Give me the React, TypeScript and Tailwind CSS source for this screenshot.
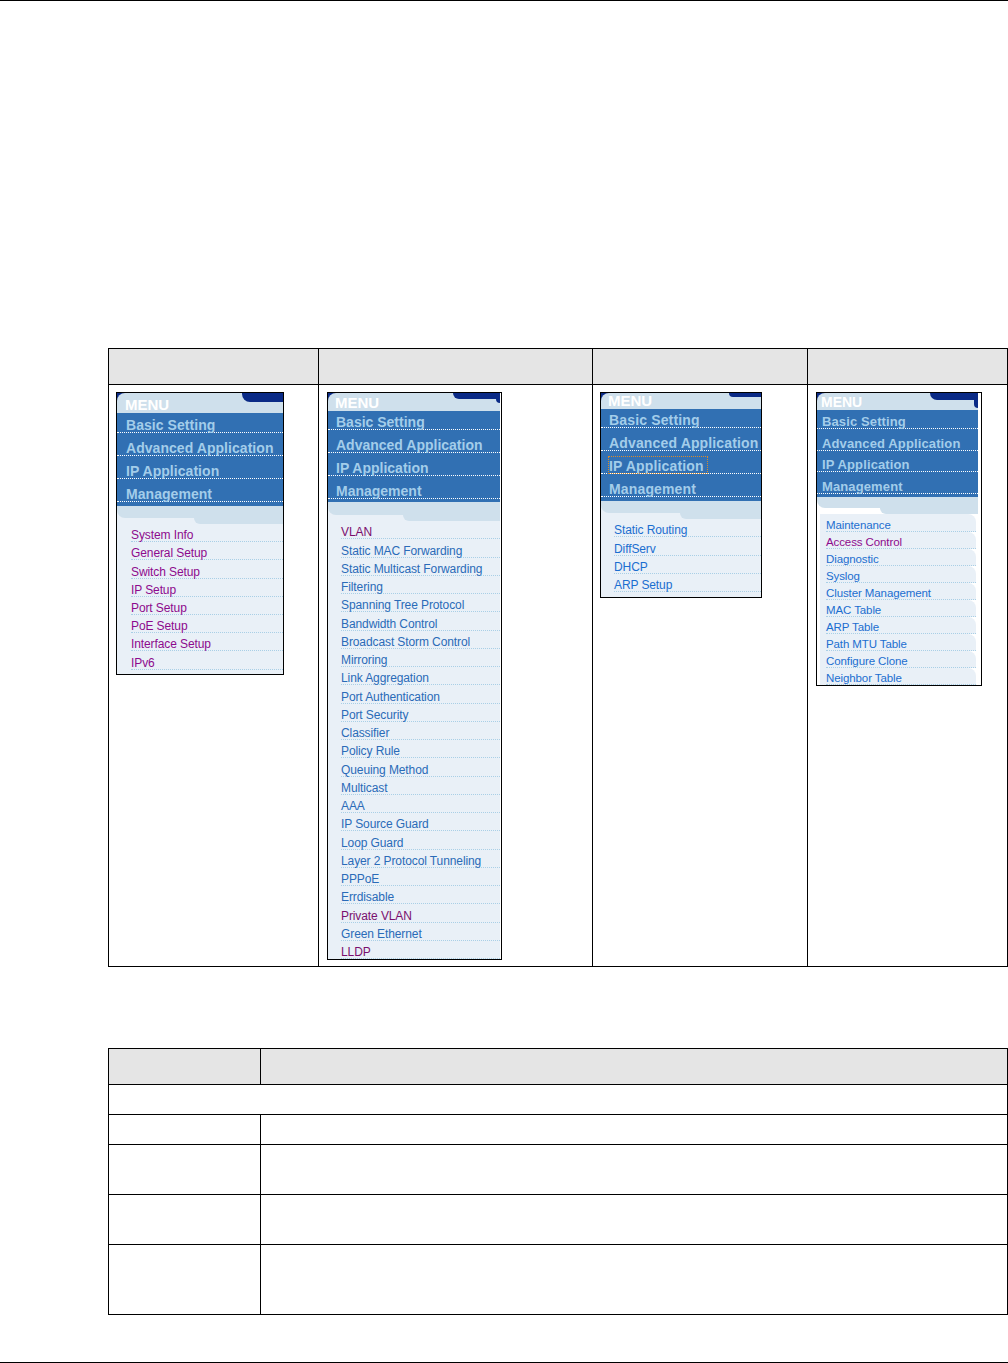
import React from 'react';

type MenuItem = { label: string; visited?: boolean };

type MenuProps = {
  width: number;
  height: number;
  padRight: number;
  headerH: number;
  textLeft: number;
  menuSize: number;
  menuTop: number;
  notchW: number;
  notchH: number;
  notchSide?: number;
  firstRow: number;
  rowH: number;
  tailH: number;
  bandH: number;
  stepLeft: number;
  itemH: number;
  itemLeft: number;
  itemSize: number;
  itemColor: string;
  visitedColor: string;
  titleSize: number;
  titleTracking: number;
  focusIp?: boolean;
  tabbed?: boolean;
  items: MenuItem[];
};

const sections = ['Basic Setting', 'Advanced Application', 'IP Application', 'Management'];

const Menu: React.FC<MenuProps> = (p) => (
  <div className="border border-black bg-white overflow-hidden font-['Liberation_Sans',Arial,sans-serif]" style={{ width: p.width, height: p.height, paddingRight: p.padRight }}>
    <div className={`h-full ${p.tabbed ? 'bg-white' : 'bg-[#e9f0f7]'}`}>
      <div className="bg-[#0a2a86]">
        <div className="relative bg-[#cfe0ec] rounded-tl-[8px] overflow-hidden" style={{ height: p.headerH, paddingLeft: p.textLeft - 1 }}>
          <div className="absolute right-0 top-0 bg-[#0a2a86] rounded-bl-[8px]" style={{ width: p.notchW, height: p.notchH }}></div>
          {p.notchSide ? (
            <div className="absolute right-0 top-0 w-[4px] bg-[#0a2a86] rounded-bl-[4px]" style={{ height: p.notchSide }}></div>
          ) : null}
          <span className="block leading-[15px] font-bold text-white" style={{ fontSize: p.menuSize, paddingTop: p.menuTop }}>MENU</span>
        </div>
      </div>
      <div className="bg-[#3170b3]">
        {sections.map((s, i) => (
          <div
            key={s}
            className="flex items-end border-b border-dotted border-white"
            style={{ height: i === 0 ? p.firstRow : p.rowH, paddingLeft: p.textLeft }}
          >
            <span
              className={`whitespace-nowrap leading-[13px] font-bold text-[#a3cdea] ${p.focusIp && i === 2 ? 'pr-[3px] pt-[3px] outline outline-1 outline-dotted outline-[#d98a2b]' : ''}`}
              style={{ fontSize: p.titleSize, letterSpacing: p.titleTracking }}
            >
              {s}
            </span>
          </div>
        ))}
        <div style={{ height: p.tailH }}></div>
      </div>
      <div className="bg-[#cfe0ec] rounded-bl-[8px]" style={{ height: p.bandH - 6 }}></div>
      <div className="h-[6px] bg-[#cfe0ec] rounded-bl-[6px]" style={{ marginLeft: p.stepLeft }}></div>
      <div>
        {p.items.map((it) => (
          <div
            key={it.label}
            className={p.tabbed ? 'bg-[#e9f0f7] rounded-tr-[8px] ml-[3px] mr-[2px]' : ''}
            style={{ height: p.itemH, paddingLeft: p.tabbed ? p.itemLeft - 3 : p.itemLeft }}
          >
            <div
              className="h-full flex items-end border-b border-dotted border-[#a9cfe6] leading-[12px] tracking-[-0.1px] whitespace-nowrap"
              style={{ fontSize: p.itemSize, color: it.visited ? p.visitedColor : p.itemColor }}
            >
              {it.label}
            </div>
          </div>
        ))}
      </div>
    </div>
  </div>
);

const menu1: MenuItem[] = ['System Info', 'General Setup', 'Switch Setup', 'IP Setup', 'Port Setup', 'PoE Setup', 'Interface Setup', 'IPv6'].map((label) => ({ label, visited: true }));

const menu2: MenuItem[] = [
  { label: 'VLAN', visited: true },
  { label: 'Static MAC Forwarding' },
  { label: 'Static Multicast Forwarding' },
  { label: 'Filtering' },
  { label: 'Spanning Tree Protocol' },
  { label: 'Bandwidth Control' },
  { label: 'Broadcast Storm Control' },
  { label: 'Mirroring' },
  { label: 'Link Aggregation' },
  { label: 'Port Authentication' },
  { label: 'Port Security' },
  { label: 'Classifier' },
  { label: 'Policy Rule' },
  { label: 'Queuing Method' },
  { label: 'Multicast' },
  { label: 'AAA' },
  { label: 'IP Source Guard' },
  { label: 'Loop Guard' },
  { label: 'Layer 2 Protocol Tunneling' },
  { label: 'PPPoE' },
  { label: 'Errdisable' },
  { label: 'Private VLAN', visited: true },
  { label: 'Green Ethernet' },
  { label: 'LLDP', visited: true },
];

const menu3: MenuItem[] = ['Static Routing', 'DiffServ', 'DHCP', 'ARP Setup'].map((label) => ({ label }));

const menu4: MenuItem[] = [
  { label: 'Maintenance' },
  { label: 'Access Control', visited: true },
  { label: 'Diagnostic' },
  { label: 'Syslog' },
  { label: 'Cluster Management' },
  { label: 'MAC Table' },
  { label: 'ARP Table' },
  { label: 'Path MTU Table' },
  { label: 'Configure Clone' },
  { label: 'Neighbor Table' },
];

const App: React.FC = () => {
  return (
    <div className="h-[1363px] w-[1008px] bg-white flex flex-col overflow-hidden border-t border-black">
      <div className="h-[347px] shrink-0"></div>

      <div className="ml-[108px] w-[900px] h-[619px] shrink-0 border border-black border-r-0 flex flex-col">
        <div className="flex h-[36px] shrink-0 bg-[#e5e5e5] border-b border-black">
          <div className="w-[210px] border-r border-black"></div>
          <div className="w-[274px] border-r border-black"></div>
          <div className="w-[215px] border-r border-black"></div>
          <div className="flex-1 border-r border-black"></div>
        </div>
        <div className="flex flex-1">
          <div className="w-[210px] border-r border-black pl-[7px] pt-[7px]">
            <Menu width={168} height={283} padRight={0} headerH={20} textLeft={9} menuSize={15} menuTop={4} notchW={41} notchH={9} firstRow={20} rowH={23} tailH={4} bandH={18} stepLeft={77} itemH={18.2} itemLeft={14} itemSize={12} itemColor="#1b6ed0" visitedColor="#8d0a8d" titleSize={14} titleTracking={0.05} items={menu1} />
          </div>
          <div className="w-[274px] border-r border-black pl-[8px] pt-[7px]">
            <Menu width={175} height={568} padRight={1} headerH={18} textLeft={8} menuSize={15} menuTop={2} notchW={47} notchH={6} notchSide={10} firstRow={19} rowH={23} tailH={3} bandH={19} stepLeft={75} itemH={18.25} itemLeft={13} itemSize={12} itemColor="#2a6bb8" visitedColor="#7a0f6e" titleSize={14} titleTracking={0} items={menu2} />
          </div>
          <div className="w-[215px] border-r border-black pl-[7px] pt-[7px]">
            <Menu width={162} height={206} padRight={0} headerH={16} textLeft={8} menuSize={15} menuTop={0} notchW={32} notchH={4} firstRow={19} rowH={23} tailH={4} bandH={18} stepLeft={79} itemH={18.3} itemLeft={13} itemSize={12} itemColor="#1b6ed0" visitedColor="#8d0a8d" titleSize={14} titleTracking={0.15} focusIp items={menu3} />
          </div>
          <div className="flex-1 border-r border-black pl-[8px] pt-[7px]">
            <Menu width={166} height={294} padRight={3} headerH={17} textLeft={5} menuSize={14} menuTop={2} notchW={48} notchH={7} notchSide={15} firstRow={19} rowH={21.67} tailH={3.5} bandH={17} stepLeft={63} itemH={17.1} itemLeft={9} itemSize={11.5} itemColor="#1b6ed0" visitedColor="#8d0a8d" titleSize={13} titleTracking={0.12} tabbed items={menu4} />
          </div>
        </div>
      </div>

      <div className="h-[81px] shrink-0"></div>

      <div className="ml-[108px] w-[900px] shrink-0 border border-black border-r-0 flex flex-col">
        <div className="flex h-[36px] bg-[#e5e5e5] border-b border-black">
          <div className="w-[152px] border-r border-black"></div>
          <div className="flex-1 border-r border-black"></div>
        </div>
        <div className="h-[30px] border-b border-black border-r"></div>
        <div className="flex h-[30px] border-b border-black">
          <div className="w-[152px] border-r border-black"></div>
          <div className="flex-1 border-r border-black"></div>
        </div>
        <div className="flex h-[50px] border-b border-black">
          <div className="w-[152px] border-r border-black"></div>
          <div className="flex-1 border-r border-black"></div>
        </div>
        <div className="flex h-[50px] border-b border-black">
          <div className="w-[152px] border-r border-black"></div>
          <div className="flex-1 border-r border-black"></div>
        </div>
        <div className="flex h-[69px]">
          <div className="w-[152px] border-r border-black"></div>
          <div className="flex-1 border-r border-black"></div>
        </div>
      </div>

      <div className="flex-1"></div>
      <div className="h-px bg-black shrink-0"></div>
    </div>
  );
};

export default App;
